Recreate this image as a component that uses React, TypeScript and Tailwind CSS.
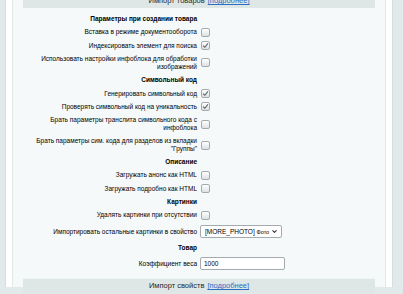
import React from "react";
import {ChevronDown} from "lucide-react";

// One row of the import settings form: label on the left half, control on the right
type RowProps = {
    label: React.ReactNode;
    h: string;
    children?: React.ReactNode;
};

const Row = ({label, h, children}: RowProps) => (
    <div className={`grid grid-cols-2 items-center ${h}`}>
        <div className="pr-[2px] text-right leading-[8px]">{label}</div>
        <div className="flex items-center pl-[1px]">{children}</div>
    </div>
);

const Heading = ({title, h}: {title: string; h: string}) => (
    <div className={`grid grid-cols-2 items-center ${h}`}>
        <div className="pr-[2px] text-right font-bold">{title}</div>
        <div />
    </div>
);

const Checkbox = ({checked}: {checked?: boolean}) => (
    <span className="ml-[1px] flex h-[9px] w-[9px] items-center justify-center rounded-[2px] border border-[#a4abae] bg-gradient-to-b from-white to-[#dce1e3]">
        {checked && (
            <svg width="7" height="7" viewBox="0 0 8 8">
                <path d="M1.2 4.2 L3.2 6 L6.8 1.6" fill="none" stroke="#5b6266" strokeWidth="1.2" />
            </svg>
        )}
    </span>
);

const Bar = ({title, className}: {title: string; className: string}) => (
    <div
        className={`flex h-[15px] items-center justify-center border-t border-[#edf2f2] bg-[#dfe6e6] text-[7.5px] text-[#1d2a2e] ${className}`}
    >
        <span>{title}</span>
        <a className="ml-[3px] text-[#2a6ec2] underline">[подробнее]</a>
    </div>
);

export default function App() {
    return (
        <div className="h-[294px] w-[403px] overflow-hidden bg-[#e2e9ea] pl-[5px] pr-[10px] font-['Liberation_Sans',Arial,sans-serif] text-[6.5px] text-black">
            <div className="h-full border-x border-[#d5dddd] bg-white px-[6px]">
                <div className="h-full border-x border-[#e1e8e8] bg-[#f5f9f9] px-[10px]">
                    <Bar title="Импорт товаров" className="-mt-[7px]" />

                    <div className="h-[4px]" />
                    <Heading title="Параметры при создании товара" h="h-[13px]" />
                    <Row label="Вставка в режиме документооборота" h="h-[14px]">
                        <Checkbox />
                    </Row>
                    <Row label="Индексировать элемент для поиска" h="h-[13px]">
                        <Checkbox checked />
                    </Row>
                    <Row
                        label={
                            <>
                                <div className="whitespace-nowrap">Использовать настройки инфоблока для обработки</div>
                                <div>изображений</div>
                            </>
                        }
                        h="h-[21px]"
                    >
                        <Checkbox />
                    </Row>

                    <Heading title="Символьный код" h="h-[14px]" />
                    <Row label="Генерировать символьный код" h="h-[13px]">
                        <Checkbox checked />
                    </Row>
                    <Row label="Проверять символьный код на уникальность" h="h-[13px]">
                        <Checkbox checked />
                    </Row>
                    <Row
                        label={
                            <>
                                <div className="whitespace-nowrap">Брать параметры транслита символьного кода с</div>
                                <div>инфоблока</div>
                            </>
                        }
                        h="h-[22px]"
                    >
                        <Checkbox />
                    </Row>
                    <Row
                        label={
                            <>
                                <div className="whitespace-nowrap">Брать параметры сим. кода для разделов из вкладки</div>
                                <div>"Группы"</div>
                            </>
                        }
                        h="h-[20px]"
                    >
                        <Checkbox />
                    </Row>

                    <Heading title="Описание" h="h-[13px]" />
                    <Row label="Загружать анонс как HTML" h="h-[14px]">
                        <Checkbox />
                    </Row>
                    <Row label="Загружать подробно как HTML" h="h-[13px]">
                        <Checkbox />
                    </Row>

                    <Heading title="Картинки" h="h-[13px]" />
                    <Row label="Удалять картинки при отсутствии" h="h-[14px]">
                        <Checkbox />
                    </Row>
                    <Row label="Импортировать остальные картинки в свойство" h="h-[19px]">
                        <div className="flex h-[13px] w-[82px] items-center justify-between rounded-[2px] border border-[#a4abae] bg-white pl-[4px] pr-[3px]">
                            <span className="whitespace-nowrap">
                                [MORE_PHOTO] <span className="text-[5.5px]">Фото</span>
                            </span>
                            <ChevronDown size={7} strokeWidth={3.5} className="text-[#333]" />
                        </div>
                    </Row>

                    <Heading title="Товар" h="h-[13px]" />
                    <Row label="Коэффициент веса" h="h-[19px]">
                        <div className="flex h-[13px] w-[85px] items-center rounded-[2px] border border-[#a4abae] bg-white pl-[3px]">
                            1000
                        </div>
                    </Row>

                    <div className="h-[5px]" />
                    <Bar title="Импорт свойств" className="" />
                </div>
            </div>
        </div>
    );
}
